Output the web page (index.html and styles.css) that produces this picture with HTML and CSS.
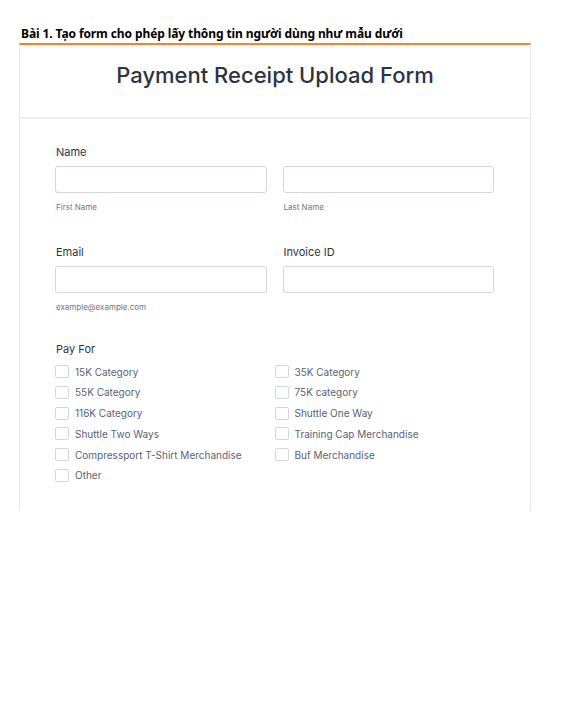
FILE: index.html
```html
<!DOCTYPE html>
<html lang="vi">
<head>
<meta charset="utf-8">
<title>Payment Receipt Upload Form</title>
<link rel="stylesheet" href="styles.css">
</head>
<body>
<div class="page">
  <h1 class="doc-title">Bài 1. Tạo form cho phép lấy thông tin người dùng như mẫu dưới</h1>
  <div class="card">
    <div class="card-head">
      <h2 class="form-title">Payment Receipt Upload Form</h2>
    </div>
    <div class="card-body">
      <div class="field">
        <div class="label">Name</div>
        <div class="row">
          <div class="col">
            <input class="input" type="text">
            <div class="sublabel">First Name</div>
          </div>
          <div class="col">
            <input class="input" type="text">
            <div class="sublabel">Last Name</div>
          </div>
        </div>
      </div>
      <div class="row">
        <div class="col field">
          <div class="label">Email</div>
          <input class="input" type="email">
          <div class="sublabel">example@example.com</div>
        </div>
        <div class="col field">
          <div class="label">Invoice ID</div>
          <input class="input" type="text">
        </div>
      </div>
      <div class="field">
        <div class="label">Pay For</div>
        <div class="checks">
          <label class="check"><span class="box"></span>15K Category</label>
          <label class="check"><span class="box"></span>35K Category</label>
          <label class="check"><span class="box"></span>55K Category</label>
          <label class="check"><span class="box"></span>75K category</label>
          <label class="check"><span class="box"></span>116K Category</label>
          <label class="check"><span class="box"></span>Shuttle One Way</label>
          <label class="check"><span class="box"></span>Shuttle Two Ways</label>
          <label class="check"><span class="box"></span>Training Cap Merchandise</label>
          <label class="check"><span class="box"></span>Compressport T-Shirt Merchandise</label>
          <label class="check"><span class="box"></span>Buf Merchandise</label>
          <label class="check"><span class="box"></span>Other</label>
        </div>
      </div>
    </div>
  </div>
</div>
</body>
</html>
```

FILE: styles.css
```css
* { box-sizing: border-box; }
body { margin: 0; background: #fff; }
.page { width: 512px; margin-left: 19px; padding-top: 26px; }
.doc-title {
  margin: 0 0 2px 2px;
  font: 700 12px/15px "Noto Sans", "Open Sans", sans-serif;
  color: #000;
  letter-spacing: -0.1px;
  white-space: nowrap;
}
.card {
  height: 467px;
  border-top: 2px solid #f5822c;
  border-left: 1px solid #e6e8f0;
  border-right: 1px solid #e6e8f0;
}
.card-head {
  height: 74px;
  display: flex;
  align-items: center;
  justify-content: center;
  border-bottom: 2px solid #eff0f5;
  padding-bottom: 12px;
}
.form-title {
  margin: 0;
  font: 500 22px/26px "Inter", sans-serif;
  color: #2c3345;
}
.card-body {
  padding: 26px 36px 0 35px;
  font-family: "Inter", sans-serif;
}
.field { margin-bottom: 33px; }
.row { display: grid; grid-template-columns: 1fr 1fr; column-gap: 16px; }
.row .field { margin-bottom: 30px; }
.label {
  font-size: 11px;
  line-height: 14px;
  color: #2c3345;
  margin-bottom: 7px;
  padding-left: 1px;
}
.input {
  display: block;
  width: 100%;
  height: 27px;
  border: 1px solid #d3d7e2;
  border-radius: 3px;
  background: #fff;
  margin: 0;
}
.sublabel {
  margin-top: 9px;
  font-size: 8px;
  line-height: 10px;
  color: #6f7789;
  padding-left: 1px;
}
.checks {
  display: grid;
  grid-template-columns: 1fr 1fr;
  row-gap: 7.8px;
  padding-top: 2px;
}
.check {
  display: flex;
  align-items: center;
  gap: 6px;
  height: 13px;
  font-size: 10px;
  color: #5a6375;
  white-space: nowrap;
}
.box {
  width: 14px;
  height: 13px;
  flex: none;
  border: 1px solid #d3d7e2;
  border-radius: 2px;
  background: #fff;
}
```
